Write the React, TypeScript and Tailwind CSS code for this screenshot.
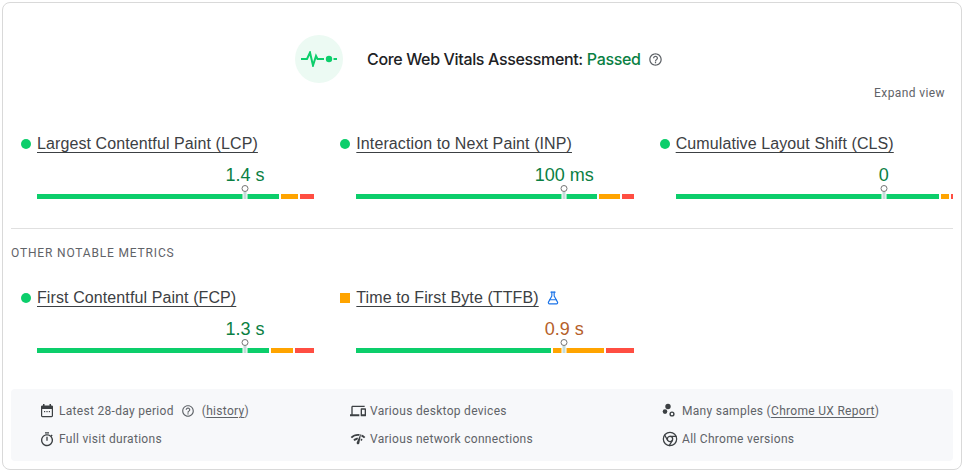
import React from "react";
import { FlaskConical, Chrome } from "lucide-react";
import { MdOutlineDevices, MdNetworkCheck, MdOutlineTimer, MdHelpOutline } from "react-icons/md";

type M = { name: string; value: string; segs: [number, number, number]; amber?: boolean; lab?: boolean };

function Metric({ name, value, segs, amber, lab }: M) {
  return (
    <div className="min-w-0">
      <div className="flex items-center h-[22px]">
        {amber ? (
          <span className="w-[10px] h-[10px] bg-[#ffa400] shrink-0" />
        ) : (
          <span className="w-[10px] h-[10px] rounded-full bg-[#0cce6b] shrink-0" />
        )}
        <a className="ml-[6px] text-[16px] leading-[22px] tracking-[0.1px] text-[#3c4043] underline underline-offset-[3px] font-['Liberation_Sans',sans-serif] whitespace-nowrap">{name}</a>
        {lab && <FlaskConical size={14} strokeWidth={2} className="ml-[7px] text-[#1a73e8]" />}
      </div>
      <div className="relative ml-[16px] mt-[9px] h-[35px]">
        <div
          className={`absolute left-[75%] -translate-x-1/2 top-0 text-[18px] leading-[22px] whitespace-nowrap font-['Liberation_Sans',sans-serif] ${amber ? "text-[#b5602a]" : "text-[#0a8043]"}`}
        >
          {value}
        </div>
        <div className="absolute left-0 right-0 bottom-0 flex gap-[2px] h-[5px]">
          <div className="bg-[#0cce6b]" style={{ width: segs[0] }} />
          <div className="bg-[#ffa400]" style={{ width: segs[1] }} />
          <div className="bg-[#ff4e42] grow" />
        </div>
        <div className="absolute left-[75%] bottom-0 -translate-x-1/2 flex flex-col items-center w-[7px]">
          <span className="w-[7px] h-[7px] rounded-full border border-[#757575] bg-white" />
          <span className="w-[5px] h-[7px] bg-white flex justify-center">
            <span className="block w-[3px] h-full bg-[#c3dcd9]" />
          </span>
        </div>
      </div>
    </div>
  );
}

function Foot({ icon, children }: { icon: React.ReactNode; children: React.ReactNode }) {
  return (
    <div className="flex items-center h-[16px] whitespace-nowrap">
      <span className="w-[16px] h-[16px] flex items-center justify-center text-[#3c4043] shrink-0">{icon}</span>
      <span className="ml-[4px]">{children}</span>
    </div>
  );
}

function CalendarIcon() {
  return (
    <svg width="16" height="16" viewBox="0 0 16 16" fill="none">
      <rect x="2.6" y="3" width="10.8" height="10.6" rx="0.8" stroke="currentColor" strokeWidth="1.2" />
      <rect x="2.6" y="3" width="10.8" height="3" fill="currentColor" />
      <rect x="4" y="1" width="1.5" height="2.5" fill="currentColor" />
      <rect x="10.5" y="1" width="1.5" height="2.5" fill="currentColor" />
      <rect x="5" y="8" width="1.2" height="1.2" fill="currentColor" />
      <rect x="7.4" y="8" width="1.2" height="1.2" fill="currentColor" />
      <rect x="9.8" y="8" width="1.2" height="1.2" fill="currentColor" />
    </svg>
  );
}

function SamplesIcon() {
  return (
    <svg width="16" height="16" viewBox="0 0 16 16" fill="none">
      <circle cx="6" cy="3.5" r="2.7" fill="currentColor" />
      <circle cx="3" cy="8.6" r="2.3" fill="currentColor" />
      <circle cx="10" cy="11" r="1.9" stroke="currentColor" strokeWidth="1.4" />
    </svg>
  );
}

export default function App() {
  return (
    <div className="w-[964px] h-[472px] bg-white p-[2px] font-['Roboto',sans-serif]">
      <div className="w-[960px] h-[468px] border border-[#d9d9d9] rounded-[8px] bg-white px-[8px] pt-[32px]">
        <div className="flex items-center h-[48px] pl-[284px]">
          <div className="w-[48px] h-[48px] rounded-full bg-[#ecfaf3] flex items-center justify-center">
            <svg width="36" height="16" viewBox="0 0 36 16" fill="none" className="text-[#0cce6b]">
              <path d="M0 8H6L9 1.5L12 14.5L15 5L16.5 8H23" stroke="currentColor" strokeWidth="2" />
              <circle cx="28" cy="8" r="3.2" fill="currentColor" />
              <path d="M32.5 8H36" stroke="currentColor" strokeWidth="2" />
            </svg>
          </div>
          <div className="ml-[24px] text-[16px] leading-[22px] text-[#202124] font-medium font-['Inter',sans-serif] tracking-[-0.35px]">
            Core Web Vitals Assessment: <span className="text-[#0a8043]">Passed</span>
          </div>
          <MdHelpOutline size={15} className="ml-[7px] text-[#5f6368]" />
        </div>
        <div className="flex justify-end mt-[1px] pr-[8px] text-[12px] leading-[18px] tracking-[0.4px] text-[#5f6368]">Expand view</div>

        <div className="pl-[10px] mt-[31px] grid grid-cols-3 gap-x-[26px]">
          <Metric name="Largest Contentful Paint (LCP)" value="1.4 s" segs={[242, 17, 14]} />
          <Metric name="Interaction to Next Paint (INP)" value="100 ms" segs={[241, 21, 12]} />
          <Metric name="Cumulative Layout Shift (CLS)" value="0" segs={[263, 8, 2]} />
        </div>

        <div className="h-px bg-[#e0e0e0] mt-[29px]" />
        <div className="mt-[15px] text-[12px] leading-[18px] tracking-[0.83px] text-[#5f6368]">OTHER NOTABLE METRICS</div>

        <div className="pl-[10px] mt-[25px] grid grid-cols-3 gap-x-[26px]">
          <Metric name="First Contentful Paint (FCP)" value="1.3 s" segs={[232, 22, 19]} />
          <Metric name="Time to First Byte (TTFB)" value="0.9 s" segs={[195, 51, 28]} amber lab />
        </div>

        <div className="mt-[36px] h-[72px] rounded-[4px] bg-[#f7f8fa] pl-[28px] pt-[14px] grid grid-cols-[311px_312px_1fr] content-start gap-y-[12px] text-[12px] leading-[16px] tracking-[0.3px] text-[#5f6368]">
          <Foot icon={<CalendarIcon />}>
            <span className="inline-flex items-center">
              Latest 28-day period
              <MdHelpOutline size={14} className="mx-[7px]" />
              <span>(<u className="underline-offset-2">history</u>)</span>
            </span>
          </Foot>
          <Foot icon={<MdOutlineDevices size={16} />}>Various desktop devices</Foot>
          <Foot icon={<SamplesIcon />}>Many samples (<u className="underline-offset-2">Chrome UX Report</u>)</Foot>
          <Foot icon={<MdOutlineTimer size={17} />}>Full visit durations</Foot>
          <Foot icon={<MdNetworkCheck size={16} />}>Various network connections</Foot>
          <Foot icon={<Chrome size={16} strokeWidth={1.9} />}>All Chrome versions</Foot>
        </div>
      </div>
    </div>
  );
}
